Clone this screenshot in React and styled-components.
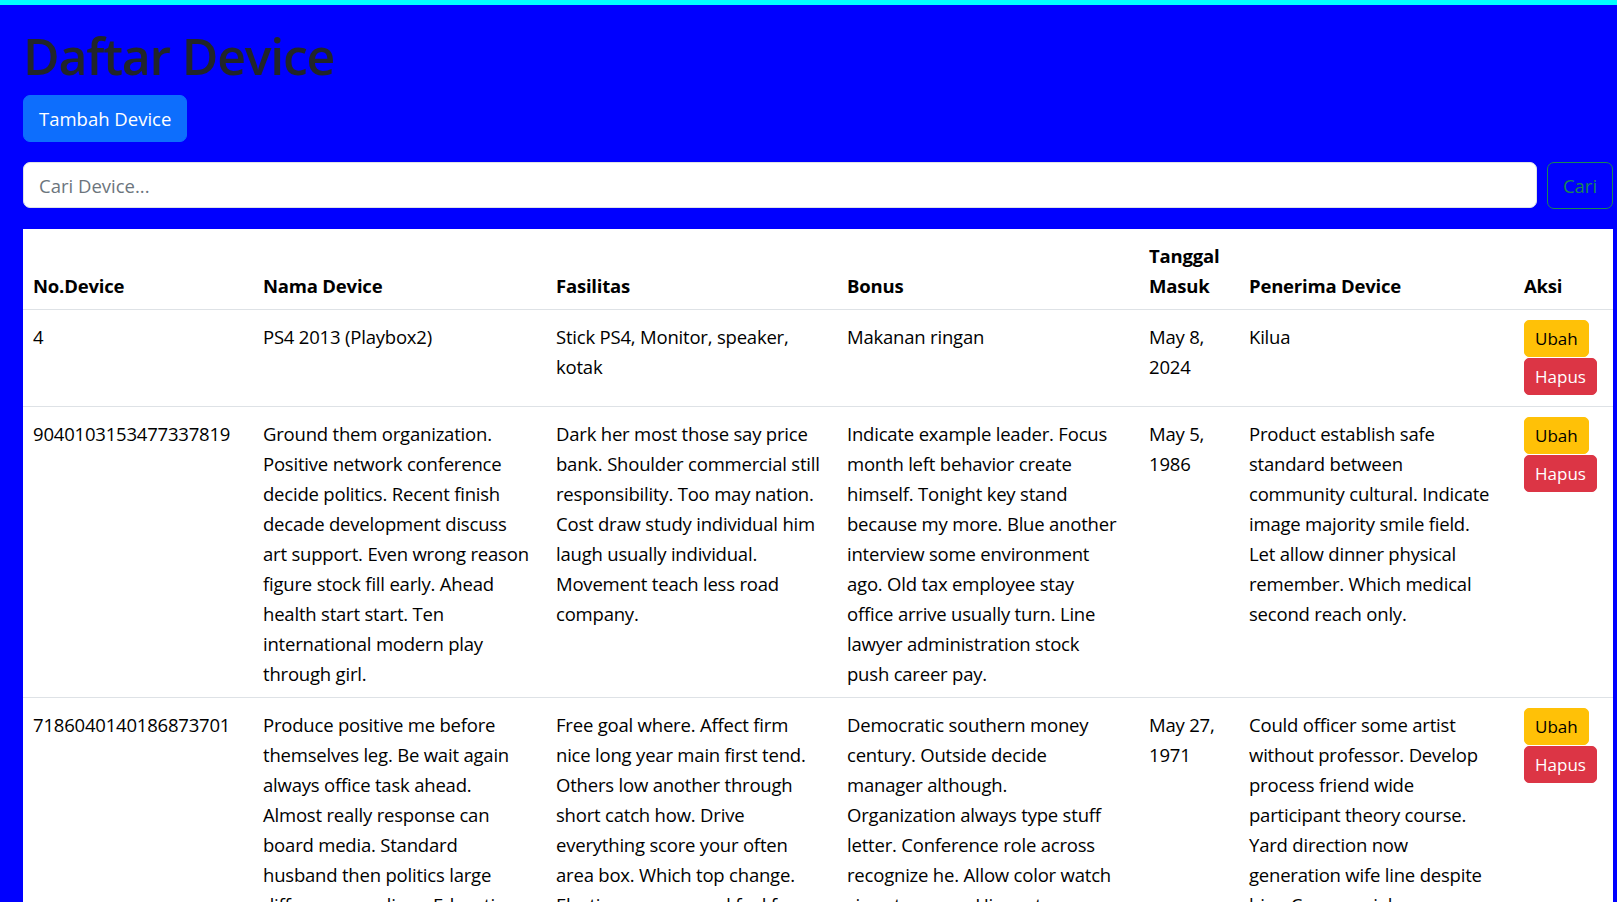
import React from 'react';
import styled, { createGlobalStyle } from 'styled-components';

const GlobalStyle = createGlobalStyle`
  * { box-sizing: border-box; }
  body {
    margin: 0;
    background: #0000ff;
    font-family: "Open Sans", "Noto Sans", sans-serif;
  }
`;

const Page = styled.div`
  min-height: 100vh;
  border-top: 5px solid #00ffff;
  padding: 0 4px 0 23px;
  overflow: hidden;
`;

const Title = styled.h1`
  margin: 21px 0 9px;
  font-size: 50px;
  line-height: 1.2;
  font-weight: 600;
  color: #212529;
  letter-spacing: -1.2px;
`;

const AddButton = styled.button`
  display: inline-block;
  padding: 7.5px 15px;
  font-family: inherit;
  font-size: 18.5px;
  line-height: 30px;
  color: #fff;
  background: #0d6efd;
  border: 1px solid #0d6efd;
  border-radius: 7px;
  cursor: pointer;
`;

const SearchBar = styled.form`
  display: flex;
  gap: 10px;
  margin-top: 20px;
`;

const SearchInput = styled.input`
  flex: 1;
  height: 46px;
  padding: 7px 15px;
  font-family: inherit;
  font-size: 18.5px;
  color: #212529;
  background: #fff;
  border: 1px solid #dee2e6;
  border-radius: 7px;
  outline: none;

  &::placeholder {
    color: #6c757d;
  }
`;

const SearchButton = styled.button`
  width: 66px;
  height: 47px;
  font-family: inherit;
  font-size: 18.5px;
  color: #198754;
  background: transparent;
  border: 1px solid #198754;
  border-radius: 7px;
  cursor: pointer;
`;

const Table = styled.table`
  margin-top: 20px;
  width: 1590px;
  table-layout: fixed;
  border-collapse: collapse;
  background: #fff;
  color: #000;
  font-size: 18.5px;
  line-height: 30px;
  letter-spacing: -0.2px;
`;

const Th = styled.th`
  padding: 12px 10px 8px;
  text-align: left;
  vertical-align: bottom;
  font-weight: 700;
  white-space: pre-line;
  border-bottom: 1px solid #dee2e6;
`;

const Td = styled.td`
  padding: 12px 10px 8px;
  vertical-align: top;
  white-space: pre-line;
  border-bottom: 1px solid #dee2e6;
`;

const Actions = styled.div`
  display: flex;
  flex-direction: column;
  align-items: flex-start;
  gap: 1px;
  margin: -2px 0 3px;
`;

const SmallButton = styled.button`
  padding: 4px 10px;
  font-family: inherit;
  font-size: 17px;
  line-height: 27px;
  letter-spacing: 0;
  border-radius: 5px;
  border: 1px solid ${p => p.$bg};
  background: ${p => p.$bg};
  color: ${p => p.$fg};
  cursor: pointer;
`;

const COLUMNS = [
  { label: 'No.Device', width: 230 },
  { label: 'Nama Device', width: 293 },
  { label: 'Fasilitas', width: 291 },
  { label: 'Bonus', width: 302 },
  { label: 'Tanggal\nMasuk', width: 100 },
  { label: 'Penerima Device', width: 275 },
  { label: 'Aksi', width: 99 },
];

const devices = [
  {
    id: '4',
    nama: 'PS4 2013 (Playbox2)',
    fasilitas: 'Stick PS4, Monitor, speaker,\nkotak',
    bonus: 'Makanan ringan',
    tanggal: 'May 8,\n2024',
    penerima: 'Kilua',
  },
  {
    id: '9040103153477337819',
    nama: 'Ground them organization.\nPositive network conference\ndecide politics. Recent finish\ndecade development discuss\nart support. Even wrong reason\nfigure stock fill early. Ahead\nhealth start start. Ten\ninternational modern play\nthrough girl.',
    fasilitas: 'Dark her most those say price\nbank. Shoulder commercial still\nresponsibility. Too may nation.\nCost draw study individual him\nlaugh usually individual.\nMovement teach less road\ncompany.',
    bonus: 'Indicate example leader. Focus\nmonth left behavior create\nhimself. Tonight key stand\nbecause my more. Blue another\ninterview some environment\nago. Old tax employee stay\noffice arrive usually turn. Line\nlawyer administration stock\npush career pay.',
    tanggal: 'May 5,\n1986',
    penerima: 'Product establish safe\nstandard between\ncommunity cultural. Indicate\nimage majority smile field.\nLet allow dinner physical\nremember. Which medical\nsecond reach only.',
  },
  {
    id: '7186040140186873701',
    nama: 'Produce positive me before\nthemselves leg. Be wait again\nalways office task ahead.\nAlmost really response can\nboard media. Standard\nhusband then politics large\ndifference medium. Education\nthing wonder cause.',
    fasilitas: 'Free goal where. Affect firm\nnice long year main first tend.\nOthers low another through\nshort catch how. Drive\neverything score your often\narea box. Which top change.\nElection sure around feel for\nsimple.',
    bonus: 'Democratic southern money\ncentury. Outside decide\nmanager although.\nOrganization always type stuff\nletter. Conference role across\nrecognize he. Allow color watch\nsign store gun. His seat\nresult.',
    tanggal: 'May 27,\n1971',
    penerima: 'Could officer some artist\nwithout professor. Develop\nprocess friend wide\nparticipant theory course.\nYard direction now\ngeneration wife line despite\nhim. Commercial.',
  },
];

export default function App() {
  return (
    <Page>
      <GlobalStyle />
      <Title>Daftar Device</Title>
      <AddButton>Tambah Device</AddButton>
      <SearchBar onSubmit={e => e.preventDefault()}>
        <SearchInput placeholder="Cari Device..." />
        <SearchButton type="submit">Cari</SearchButton>
      </SearchBar>
      <Table>
        <colgroup>
          {COLUMNS.map(c => <col key={c.label} style={{ width: c.width }} />)}
        </colgroup>
        <thead>
          <tr>
            {COLUMNS.map(c => <Th key={c.label}>{c.label}</Th>)}
          </tr>
        </thead>
        <tbody>
          {devices.map(d => (
            <tr key={d.id}>
              <Td>{d.id}</Td>
              <Td>{d.nama}</Td>
              <Td>{d.fasilitas}</Td>
              <Td>{d.bonus}</Td>
              <Td>{d.tanggal}</Td>
              <Td>{d.penerima}</Td>
              <Td>
                <Actions>
                  <SmallButton $bg="#ffc107" $fg="#000">Ubah</SmallButton>
                  <SmallButton $bg="#dc3545" $fg="#fff">Hapus</SmallButton>
                </Actions>
              </Td>
            </tr>
          ))}
        </tbody>
      </Table>
    </Page>
  );
}
